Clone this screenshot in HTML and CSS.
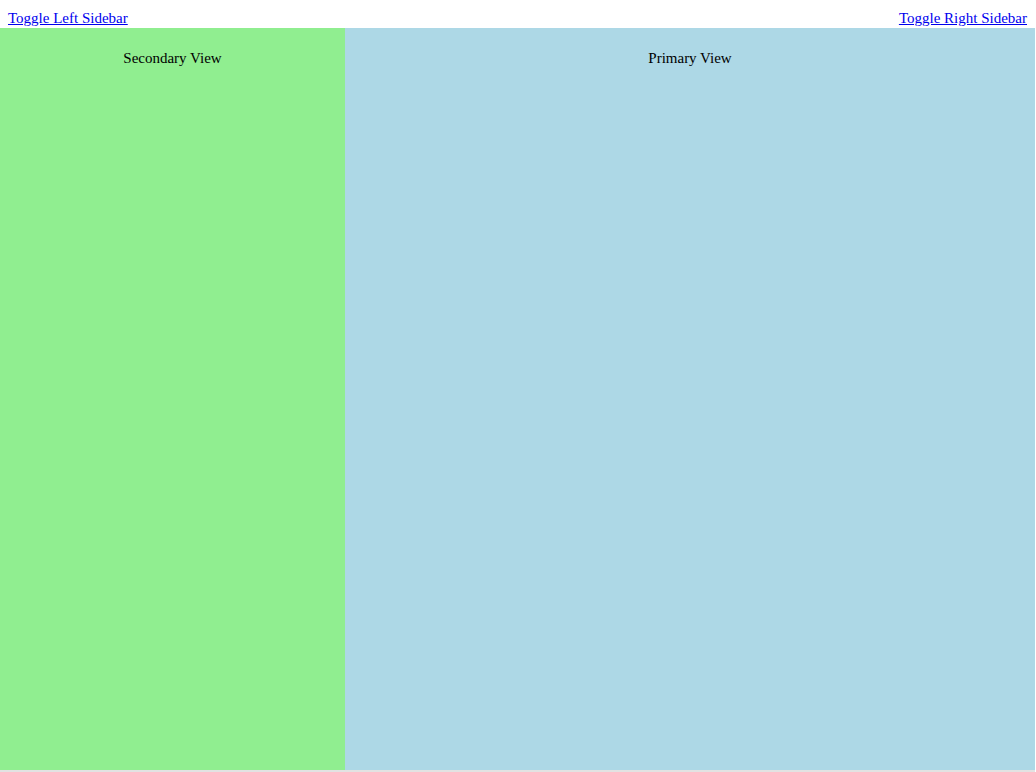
FILE: index.html
```html
<!DOCTYPE html>
<html>
<head>
<meta charset="utf-8">
<link rel="stylesheet" href="styles.css">
</head>
<body>
<div class="header">
  <a href="#" class="toggle">Toggle Left Sidebar</a>
  <a href="#" class="toggle">Toggle Right Sidebar</a>
</div>
<div class="main">
  <div class="secondary"><div class="label">Secondary View</div></div>
  <div class="primary"><div class="label">Primary View</div></div>
</div>
</body>
</html>
```
FILE: styles.css
```css
html, body {
  margin: 0;
  padding: 0;
  background: #ffffff;
  font-family: "Liberation Serif", "Times New Roman", serif;
  font-size: 15px;
}
.header {
  display: flex;
  justify-content: space-between;
  box-sizing: border-box;
  width: 1035px;
  padding: 9px 8px 1px 8px;
  height: 28px;
  line-height: 18px;
}
.toggle {
  color: #0000ee;
  text-decoration: underline;
}
.main {
  display: flex;
  height: 742px;
  width: 1035px;
  border-bottom: 2px solid #e2e2e2;
}
.secondary {
  flex: 1;
  background: #90ee90;
}
.primary {
  flex: 2;
  background: #add8e6;
}
.label {
  text-align: center;
  padding-top: 21px;
  line-height: 18px;
}
```
